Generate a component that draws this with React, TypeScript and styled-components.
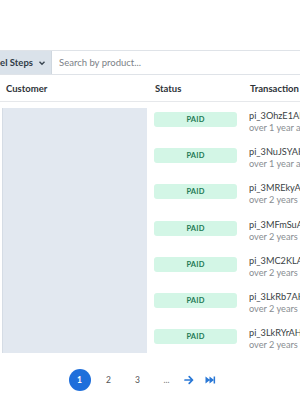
import styled, { createGlobalStyle } from "styled-components";

const GlobalStyle = createGlobalStyle`
  html, body {
    margin: 0;
    padding: 0;
    background: #ffffff;
  }
  body {
    font-family: "Lato", "Open Sans", sans-serif;
    color: #333;
    width: 300px;
    height: 400px;
    overflow: hidden;
  }
`

const rows = [
    {id: 'pi_3OhzE1AHkx8Q2m', ago: 'over 1 year ago'},
    {id: 'pi_3NuJSYAHkx8Q2m', ago: 'over 1 year ago'},
    {id: 'pi_3MREkyAHkx8Q2m', ago: 'over 2 years ago'},
    {id: 'pi_3MFmSuAHkx8Q2m', ago: 'over 2 years ago'},
    {id: 'pi_3MC2KLAHkx8Q2m', ago: 'over 2 years ago'},
    {id: 'pi_3LkRb7AHkx8Q2m', ago: 'over 2 years ago'},
    {id: 'pi_3LkRYrAHjx8Q2m', ago: 'over 2 years ago'},
]

export default function App() {
    return (
        <Page>
            <GlobalStyle/>
            <Toolbar>
                <Select>
                    Funnel Steps
                    <Chevron viewBox="0 0 10 10">
                        <path d="M2.5 3.8 L5 6.3 L7.5 3.8" />
                    </Chevron>
                </Select>
                <Search placeholder="Search by product..."/>
            </Toolbar>

            <HeadRow>
                <HeadCell>Customer</HeadCell>
                <HeadCell>Status</HeadCell>
                <HeadCell>Transaction</HeadCell>
            </HeadRow>

            <Body>
                <Skeleton $rows={rows.length}/>
                {rows.map((r, i) => (
                    <Row key={r.id} $row={i + 1}>
                        <StatusCell>
                            <Badge>PAID</Badge>
                        </StatusCell>
                        <TxCell>
                            <TxId>{r.id}</TxId>
                            <TxAgo>{r.ago}</TxAgo>
                        </TxCell>
                    </Row>
                ))}
            </Body>

            <Pagination>
                <PageBtn $active>1</PageBtn>
                <PageBtn>2</PageBtn>
                <PageBtn>3</PageBtn>
                <Ellipsis>...</Ellipsis>
                <IconBtn>
                    <svg viewBox="0 0 12 12" width="12" height="12">
                        <path d="M2 6 H9.5 M6.2 2.7 L9.5 6 L6.2 9.3" fill="none" stroke="#2a78d6" strokeWidth="1.7" strokeLinecap="round" strokeLinejoin="round"/>
                    </svg>
                </IconBtn>
                <IconBtn>
                    <svg viewBox="0 0 12 12" width="12" height="12">
                        <path d="M1.5 2.5 L6 6 L1.5 9.5 Z M5.5 2.5 L10 6 L5.5 9.5 Z" fill="#2a78d6"/>
                        <rect x="9.6" y="2.5" width="1.5" height="7" fill="#2a78d6"/>
                    </svg>
                </IconBtn>
            </Pagination>
            <Footer/>
        </Page>
    );
}

const Page = styled.div`
  width: 300px;
  height: 400px;
  display: flex;
  flex-direction: column;
  padding-top: 50px;
  box-sizing: border-box;
  overflow: hidden;
`
const Toolbar = styled.div`
  display: flex;
  height: 23px;
  border-top: 1px solid #dfe3e8;
  border-bottom: 1px solid #dfe3e8;
  flex-shrink: 0;
`
const Select = styled.div`
  display: flex;
  align-items: center;
  gap: 4px;
  margin-left: -25px;
  padding: 0 4px 0 4px;
  background: #dae2ea;
  border-right: 1px solid #cfd7df;
  font-size: 9.5px;
  font-weight: 700;
  color: #2f3b46;
  white-space: nowrap;
`
const Chevron = styled.svg`
  width: 10px;
  height: 10px;
  fill: none;
  stroke: #3a4651;
  stroke-width: 1.4;
`
const Search = styled.input`
  flex: 1;
  min-width: 0;
  border: none;
  outline: none;
  padding: 0 7px;
  font-family: inherit;
  font-size: 9.5px;
  color: #333;
  background: #fff;

  &::placeholder {
    color: #7b8187;
  }
`
const HeadRow = styled.div`
  display: grid;
  grid-template-columns: 150px 96px 1fr;
  height: 26px;
  align-items: center;
  border-bottom: 1px solid #e6e8eb;
  flex-shrink: 0;
`
const HeadCell = styled.div`
  font-size: 9.5px;
  font-weight: 700;
  color: #2e3338;
  padding-left: 6px;

  &:nth-child(2) {
    padding-left: 5px;
  }
  &:nth-child(3) {
    padding-left: 4px;
  }
`
const Body = styled.div`
  display: grid;
  grid-template-columns: 150px 96px 1fr;
  grid-auto-rows: 36.3px;
  padding-top: 1px;
  flex-shrink: 0;
`
const Skeleton = styled.div<{ $rows: number }>`
  grid-column: 1;
  grid-row: 1 / span ${p => p.$rows};
  margin: 5px 3px 4px 2px;
  background: #e2e8f0;
  border-left: 1px solid #d5dce5;
`
const Row = styled.div<{ $row: number }>`
  display: contents;

  & > * {
    grid-row: ${p => p.$row};
  }
`
const StatusCell = styled.div`
  grid-column: 2;
  display: flex;
  align-items: center;
  padding-left: 4px;
  padding-right: 9px;
  padding-bottom: 4px;
`
const Badge = styled.div`
  flex: 1;
  height: 15px;
  display: flex;
  align-items: center;
  justify-content: center;
  background: #d3f6e6;
  border-radius: 3px;
  font-size: 7.5px;
  font-weight: 700;
  color: #1f7a55;
  letter-spacing: 0.2px;
`
const TxCell = styled.div`
  grid-column: 3;
  display: flex;
  flex-direction: column;
  justify-content: center;
  padding-left: 3px;
  padding-top: 1px;
  white-space: nowrap;
  overflow: hidden;
  line-height: 12px;
`
const TxId = styled.div`
  font-size: 9.2px;
  color: #3a3f44;
`
const TxAgo = styled.div`
  font-size: 9.2px;
  color: #888d92;
`
const Pagination = styled.div`
  display: flex;
  align-items: center;
  height: 34px;
  padding-left: 65px;
  margin-top: 6px;
  flex-shrink: 0;
`
const PageBtn = styled.div<{ $active?: boolean }>`
  width: 29px;
  display: flex;
  justify-content: center;
  align-items: center;
  font-size: 8.5px;
  font-weight: ${p => p.$active ? 700 : 400};
  color: ${p => p.$active ? '#fff' : '#555'};

  ${p => p.$active && `
    width: 22px;
    height: 22px;
    margin: 0 3.5px;
    border-radius: 50%;
    background: #1f6fdb;
  `}
`
const Ellipsis = styled.div`
  width: 26px;
  padding-left: 3px;
  box-sizing: border-box;
  display: flex;
  justify-content: center;
  font-size: 8.5px;
  color: #777;
`
const IconBtn = styled.div`
  width: 21px;
  display: flex;
  justify-content: center;
  align-items: center;
`
const Footer = styled.div`
  flex: 1;
  margin-top: 5px;
  background: #f5f6f8;
`
